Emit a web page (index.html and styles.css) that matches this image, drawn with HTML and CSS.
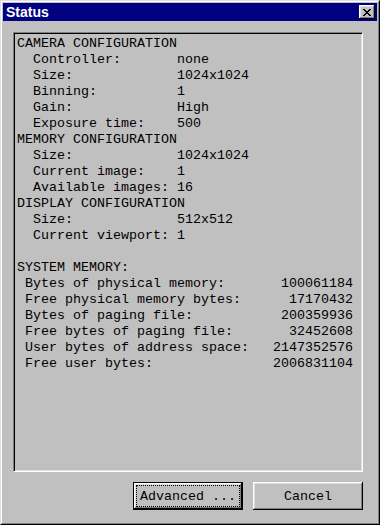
FILE: index.html
```html
<!DOCTYPE html>
<html lang="en">
<head>
  <meta charset="UTF-8" />
  <title>Status</title>
  <link rel="stylesheet" href="styles.css">
</head>
<body>
  <div class="window">
    <div class="window-inner">
      <div class="titlebar">
        <span class="title">Status</span>
        <button type="button" class="close-btn" aria-label="Close">
          <svg width="8" height="7" viewBox="0 0 8 7" shape-rendering="crispEdges">
            <path fill="#000" d="M0 0h2v1H0z M6 0h2v1H6z M1 1h2v1H1z M5 1h2v1H5z M2 2h4v1H2z M3 3h2v1H3z M2 4h4v1H2z M1 5h2v1H1z M5 5h2v1H5z M0 6h2v1H0z M6 6h2v1H6z"/>
          </svg>
        </button>
      </div>

      <div class="dialog-body">
<pre class="status-panel">CAMERA CONFIGURATION
  Controller:       none
  Size:             1024x1024
  Binning:          1
  Gain:             High
  Exposure time:    500
MEMORY CONFIGURATION
  Size:             1024x1024
  Current image:    1
  Available images: 16
DISPLAY CONFIGURATION
  Size:             512x512
  Current viewport: 1

SYSTEM MEMORY:
 Bytes of physical memory:       100061184
 Free physical memory bytes:      17170432
 Bytes of paging file:           200359936
 Free bytes of paging file:       32452608
 User bytes of address space:   2147352576
 Free user bytes:               2006831104</pre>

        <div class="button-row">
          <button type="button" class="btn btn-default">Advanced ...</button>
          <button type="button" class="btn">Cancel</button>
        </div>
      </div>
    </div>
  </div>
</body>
</html>
```

FILE: styles.css
```css
* { box-sizing: border-box; }

body {
  margin: 0;
  background-color: #c0c0c0;
}

.window {
  width: 380px;
  height: 525px;
  background-color: #c0c0c0;
  border: 1px solid;
  border-color: #dfdfdf #000 #000 #dfdfdf;
}

.window-inner {
  height: 100%;
  padding: 1px;
  border: 1px solid;
  border-color: #fff #808080 #808080 #fff;
}

.titlebar {
  height: 18px;
  background-color: #000080;
  display: flex;
  align-items: center;
  justify-content: space-between;
  padding: 0 2px 0 3px;
}

.title {
  font-family: "Liberation Sans", Arial, sans-serif;
  font-weight: bold;
  font-size: 14px;
  line-height: 18px;
  color: #fff;
}

.close-btn {
  width: 16px;
  height: 14px;
  padding: 0;
  border: none;
  background-color: #c0c0c0;
  display: flex;
  align-items: center;
  justify-content: center;
  box-shadow: inset -1px -1px #000, inset 1px 1px #fff,
              inset -2px -2px #808080, inset 2px 2px #dfdfdf;
}

.close-btn svg {
  display: block;
}

.dialog-body {
  padding: 11px 0 0 10px;
}

.status-panel {
  width: 350px;
  height: 440px;
  margin: 0;
  padding: 3px 0 0 3px;
  background-color: #c0c0c0;
  border: 1px solid;
  border-color: #808080 #fff #fff #808080;
  box-shadow: inset 1px 1px #000, inset -1px -1px #dfdfdf;
  font-family: "Liberation Mono", "Courier New", monospace;
  font-size: 13.33px;
  line-height: 16px;
  color: #000;
  overflow: hidden;
}

.button-row {
  width: 350px;
  margin-top: 10px;
  display: flex;
  justify-content: flex-end;
  gap: 10px;
}

.btn {
  width: 110px;
  height: 28px;
  padding: 0;
  border: none;
  background-color: #c0c0c0;
  font-family: "Liberation Mono", "Courier New", monospace;
  font-size: 13.33px;
  color: #000;
  box-shadow: inset -1px -1px #000, inset 1px 1px #fff,
              inset -2px -2px #808080, inset 2px 2px #dfdfdf;
}

.btn-default {
  border: 1px solid #000;
  box-shadow: inset -1px -1px #000, inset 1px 1px #fff,
              inset -2px -2px #808080, inset 2px 2px #dfdfdf;
  outline: 1px dotted #000;
  outline-offset: -4px;
}
```
